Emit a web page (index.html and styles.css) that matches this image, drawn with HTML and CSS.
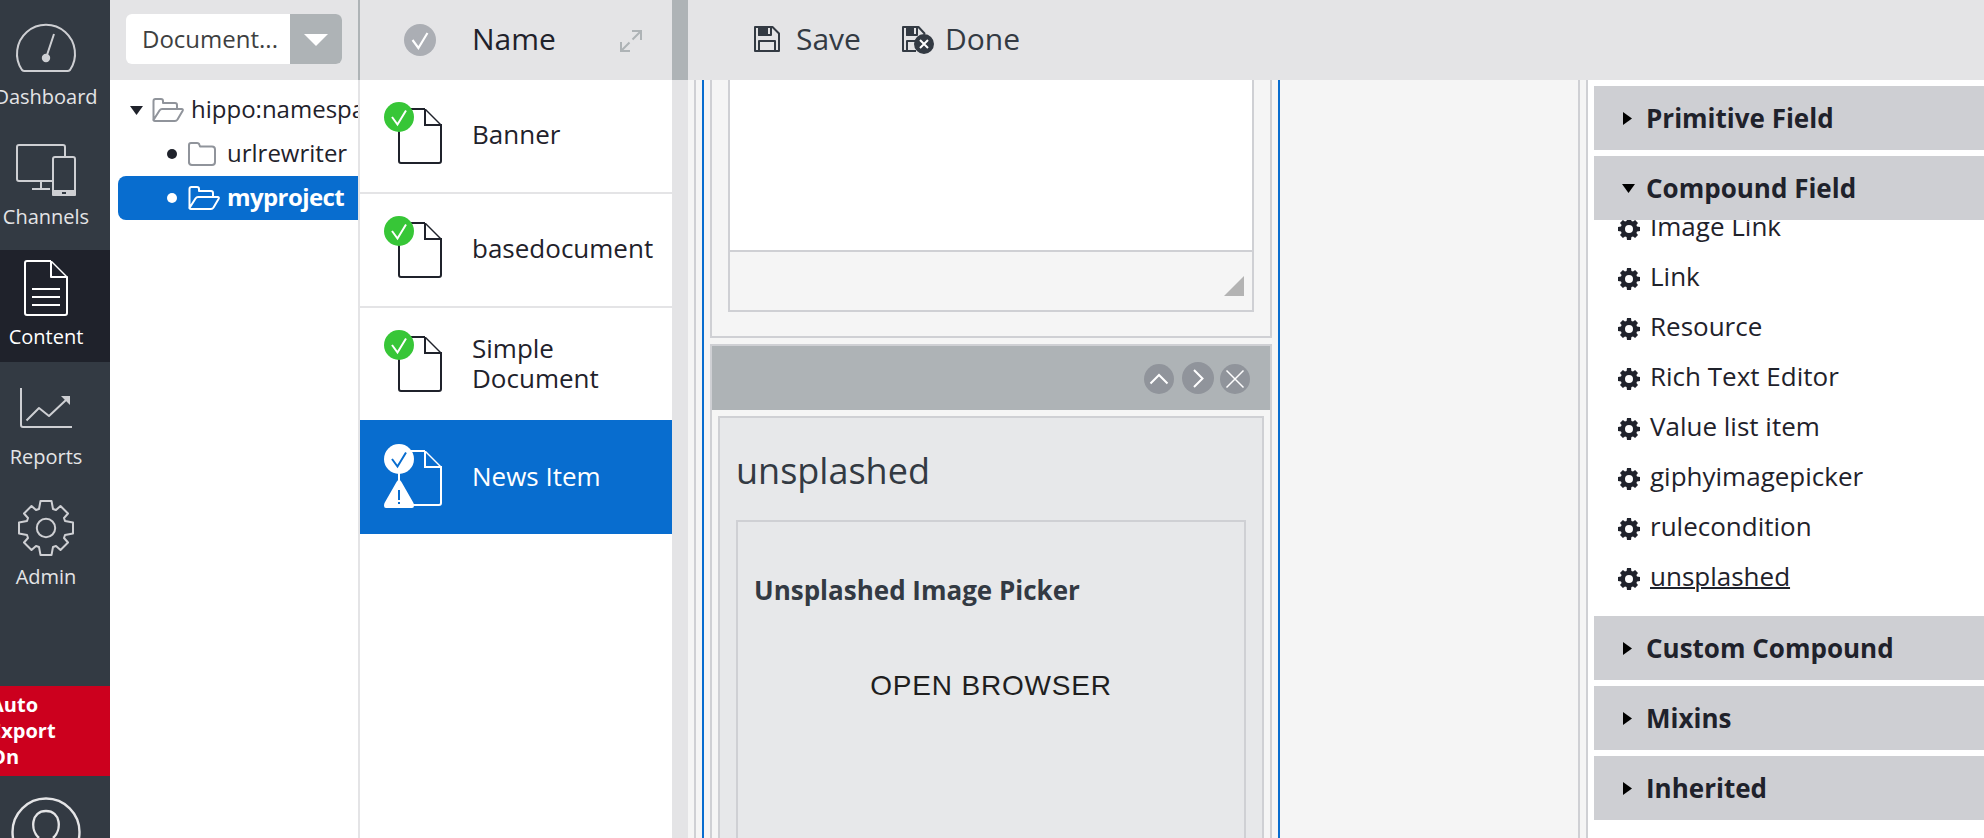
FILE: index.html
```html
<!DOCTYPE html>
<html lang="en">
<head>
<meta charset="utf-8">
<title>Content</title>
<link rel="stylesheet" href="styles.css">
</head>
<body>
<svg class="defs" width="0" height="0" aria-hidden="true">
  <symbol id="cog" viewBox="-11 -11 22 22">
    <path fill-rule="evenodd" d="M-2-11H2L2.4-8 4-7.4 6.1-9 9-6.1 7.4-4 8-2.4 11-2V2L8 2.4 7.4 4 9 6.1 6.1 9 4 7.4 2.4 8 2 11H-2L-2.4 8-4 7.4-6.1 9-9 6.1-7.4 4-8 2.4-11 2V-2L-8-2.4-7.4-4-9-6.1-6.1-9-4-7.4-2.4-8ZM0-4A4 4 0 1 0 0 4 4 4 0 1 0 0-4Z"/>
  </symbol>
  <symbol id="sheet" viewBox="0 0 44 56">
    <path class="ln" d="M27 1H3Q1 1 1 3V53Q1 55 3 55H41Q43 55 43 53V17H27V1"/>
    <path class="thin" d="M27.5 1.5L43 17"/>
  </symbol>
  <symbol id="tick" viewBox="0 0 30 30">
    <circle class="disc" cx="15" cy="15" r="15"/>
    <path class="mark" d="M8 15L13.5 22.5 22 8.5"/>
  </symbol>
  <symbol id="folder-open" viewBox="0 0 32 24">
    <path class="ln" d="M1.500 22V3Q1.500 1 3.500 1H9Q11 1 11 3V5H23Q25 5 25 7V10.500M1.500 22L7.500 12.500Q8.500 11 10 11H29.500Q31.500 11 30.500 13L25.500 21.500Q24.500 23 23 23H3Q1 23 1.500 21"/>
  </symbol>
  <symbol id="folder" viewBox="0 0 28 24">
    <path class="ln" d="M1 21V3Q1 1 3 1H9Q11 1 11.500 3L12 4.500H24Q27 4.500 27 7.500V20Q27 23 24 23H4Q1 23 1 20Z"/>
  </symbol>
</svg>

<div class="app">
  <nav class="side">
    <a class="nav"><svg class="nav-ico" viewBox="10 0 72 74"><path d="M24.500 61Q23 61 22 60A29 29 0 1 1 70 60Q69 61 67.500 61ZM46 48L54 24"/><circle class="fill" cx="46" cy="48" r="3.200"/></svg><span>Dashboard</span></a>
    <a class="nav"><svg class="nav-ico" viewBox="10 0 72 74"><path d="M52 51H19Q17 51 17 49V17Q17 15 19 15H63Q65 15 65 17V26M41 51V59M32 59H50M55 27H73Q75 27 75 29V63Q75 65 73 65H55Q53 65 53 63V29Q53 27 55 27Z"/><path class="fill" d="M53 61H75V65H53Z"/><path class="hole" d="M62 62H66V64H62Z"/></svg><span>Channels</span></a>
    <a class="nav on"><svg class="nav-ico" viewBox="10 0 72 74"><path d="M51 11H27Q25 11 25 13V63Q25 65 27 65H65Q67 65 67 63V27H51V11M32 39H60M32 47H60M32 55H60"/><path class="thin" d="M51.500 11.500L67 27"/></svg><span>Content</span></a>
    <a class="nav"><svg class="nav-ico" viewBox="10 0 72 74"><path d="M21 18V55Q21 57 23 57H72M26.500 50.500L39 38 49 46 66 30"/><path class="fill flat" d="M61 26H70V35Z"/></svg><span>Reports</span></a>
    <a class="nav"><svg class="nav-ico" viewBox="-36 -38 72 74"><path d="M-5.500-27H5.500L7-19 10-18 14.500-22 22-14.500 18-10 19-7 27-5.500V5.500L19 7 18 10 22 14.500 14.500 22 10 18 7 19 5.500 27H-5.500L-7 19-10 18-14.500 22-22 14.500-18 10-19 7-27 5.500V-5.500L-19-7-18-10-22-14.500-14.500-22-10-18-7-19Z"/><circle cx="0" cy="0" r="9.200"/></svg><span>Admin</span></a>
    <div class="export"><div class="export-text">Auto<br>Export<br>On</div></div>
    <svg class="user" viewBox="0 0 72 42"><circle cx="36" cy="36" r="33.500"/><path d="M29 42C20 34 21 15 36 15S52 34 43 42"/></svg>
  </nav>

  <section class="tree-col">
    <header class="bar tree-bar">
      <div class="select"><span class="select-text">Document...</span><span class="select-btn"><svg width="24" height="12" viewBox="0 0 24 12"><path d="M0 0H24L12 12Z"/></svg></span></div>
    </header>
    <div class="tree">
      <div class="node root"><svg class="caret" viewBox="0 0 13 9"><path d="M0 0H13L6.500 9Z"/></svg><svg class="fold" viewBox="0 0 32 24"><use href="#folder-open"/></svg><span>hippo:namespaces</span></div>
      <div class="node child"><i class="dot"></i><svg class="fold closed" viewBox="0 0 28 24"><use href="#folder"/></svg><span>urlrewriter</span></div>
      <div class="node child sel"><i class="dot"></i><svg class="fold" viewBox="0 0 32 24"><use href="#folder-open"/></svg><span>myproject</span></div>
    </div>
  </section>

  <section class="list-col">
    <header class="bar list-bar">
      <svg class="tick-head" viewBox="0 0 30 30"><use href="#tick"/></svg>
      <span class="list-title">Name</span>
      <svg class="expand" viewBox="0 0 22 22"><path d="M12 1H21V10M21 1L12.500 9.500M1 12V21H10M1 21L9.500 12.500"/></svg>
    </header>
    <div class="row"><div class="doc"><svg class="sheet"><use href="#sheet"/></svg><svg class="badge"><use href="#tick"/></svg></div><span>Banner</span></div>
    <div class="row"><div class="doc"><svg class="sheet"><use href="#sheet"/></svg><svg class="badge"><use href="#tick"/></svg></div><span>basedocument</span></div>
    <div class="row before"><div class="doc"><svg class="sheet"><use href="#sheet"/></svg><svg class="badge"><use href="#tick"/></svg></div><span>Simple<br>Document</span></div>
    <div class="row active"><div class="doc"><svg class="sheet"><use href="#sheet"/></svg><svg class="badge"><use href="#tick"/></svg><svg class="warn" viewBox="0 0 30 28"><path class="disc" d="M15 0Q16.500 0 17.500 2L29.500 23Q31 28 28 28H2Q-1 28 .5 23L12.500 2Q13.500 0 15 0Z"/><path class="bang" d="M15 10V20M15 22V24"/></svg></div><span>News Item</span></div>
  </section>

  <div class="split"><div class="split-top"></div></div>

  <main class="main">
    <header class="bar tools">
      <a class="tool"><svg class="save-ico" viewBox="0 0 26 26"><path d="M1 1H18.500L25 7.500V25H1ZM5 25V15H21V25M5 1V9H17V1"/><path class="solid" d="M5 1H13V9H5Z"/></svg><span>Save</span></a>
      <a class="tool"><svg class="done-ico" viewBox="0 0 32 28"><path d="M14 25H1V1H16.500L23 8M5 25V15H14M5 1V9H15V1"/><path class="solid" d="M5 1H11V9H5Z"/><circle class="solid" cx="22" cy="18" r="9"/><path class="x" d="M18 14L26 22M26 14L18 22"/></svg><span>Done</span></a>
    </header>
    <div class="body">
      <div class="canvas">
        <div class="column">
          <div class="field">
            <div class="editor"><div class="paper"></div><div class="foot"><svg width="20" height="20" viewBox="0 0 20 20"><path d="M20 0V20H0Z"/></svg></div></div>
          </div>
          <div class="compound">
            <div class="c-head">
              <svg class="b30" viewBox="0 0 30 30"><circle cx="15" cy="15" r="15"/><path d="M6.500 19.500L15 11 23.500 19.500"/></svg>
              <svg class="b32" viewBox="0 0 32 32"><circle cx="16" cy="16" r="16"/><path d="M12 8L20.500 16.500 12 25"/></svg>
              <svg class="b30" viewBox="0 0 30 30"><circle cx="15" cy="15" r="15"/><path class="fine" d="M6.500 6.500L23.500 23.500M23.500 6.500L6.500 23.500"/></svg>
            </div>
            <div class="c-body">
              <h2>unsplashed</h2>
              <div class="picker"><h3>Unsplashed Image Picker</h3><div class="open">OPEN BROWSER</div></div>
            </div>
          </div>
        </div>
      </div>
      <aside class="fields">
        <h4><svg class="right" viewBox="0 0 9 13"><path d="M0 0L9 6.500 0 13Z"/></svg>Primitive Field</h4>
        <h4><svg class="down" viewBox="0 0 13 9"><path d="M0 0H13L6.500 9Z"/></svg>Compound Field</h4>
        <div class="items">
          <div class="item"><svg class="cog"><use href="#cog"/></svg><span>Image Link</span></div>
          <div class="item"><svg class="cog"><use href="#cog"/></svg><span>Link</span></div>
          <div class="item"><svg class="cog"><use href="#cog"/></svg><span>Resource</span></div>
          <div class="item"><svg class="cog"><use href="#cog"/></svg><span>Rich Text Editor</span></div>
          <div class="item"><svg class="cog"><use href="#cog"/></svg><span>Value list item</span></div>
          <div class="item"><svg class="cog"><use href="#cog"/></svg><span>giphyimagepicker</span></div>
          <div class="item"><svg class="cog"><use href="#cog"/></svg><span>rulecondition</span></div>
          <div class="item hover"><svg class="cog"><use href="#cog"/></svg><span>unsplashed</span></div>
        </div>
        <h4><svg class="right" viewBox="0 0 9 13"><path d="M0 0L9 6.500 0 13Z"/></svg>Custom Compound</h4>
        <h4><svg class="right" viewBox="0 0 9 13"><path d="M0 0L9 6.500 0 13Z"/></svg>Mixins</h4>
        <h4><svg class="right" viewBox="0 0 9 13"><path d="M0 0L9 6.500 0 13Z"/></svg>Inherited</h4>
      </aside>
    </div>
  </main>
</div>
</body>
</html>
```
FILE: styles.css
```css
* { box-sizing: border-box; }
body { margin: 0; background: #fff; color: #1f222b; font-family: "Open Sans", "Noto Sans", sans-serif; font-size: 26px; line-height: 30px; overflow: hidden; }
svg { display: block; flex: none; }
.defs { position: absolute; }
h2, h3, h4 { margin: 0; }
.app { display: flex; width: 1984px; height: 838px; overflow: hidden; }
.bar { height: 80px; flex: none; background: #e4e4e6; display: flex; align-items: center; }

.side { width: 110px; flex: none; background: #333a43; padding-top: 10px; display: flex; flex-direction: column; overflow: hidden; }
.nav { height: 112px; flex: none; margin-bottom: 8px; padding-right: 18px; display: flex; flex-direction: column; align-items: center; font-size: 20px; line-height: 26px; color: #e4e4e6; white-space: nowrap; }
.nav-ico { width: 72px; height: 74px; fill: none; stroke: #cecfd3; stroke-width: 2; stroke-linejoin: round; }
.nav-ico .fill { fill: #cecfd3; }
.nav-ico .flat { stroke: none; }
.nav-ico .hole { fill: #333a43; stroke: none; }
.thin { stroke-width: 1.4; }
.nav.on { background: #1f222b; color: #fff; }
.nav.on .nav-ico { stroke: #fff; }
.export { height: 90px; flex: none; margin-top: 76px; padding-top: 6px; background: #cc001e; color: #fff; font-size: 20px; line-height: 26px; font-weight: 700; }
.export-text { margin-left: -10px; }
.user { width: 72px; height: 42px; margin: 20px 0 0 10px; fill: none; stroke: #e4e4e6; stroke-width: 2.4; }

.tree-col { width: 250px; flex: none; overflow: hidden; }
.tree-bar { width: 250px; padding-left: 16px; padding-bottom: 2px; border-right: 2px solid #aeb3b6; }
.select { display: flex; width: 216px; height: 50px; border-radius: 6px; overflow: hidden; background: #fff; color: #3e3f41; }
.select-text { width: 164px; padding-left: 16px; line-height: 49px; font-size: 24px; }
.select-btn { flex: 1; background: #aeb3b6; display: flex; align-items: center; justify-content: center; fill: #fff; padding-top: 2px; }
.tree { height: 758px; padding: 8px 0 0 8px; border-right: 2px solid #e4e4e6; overflow: hidden; font-size: 24px; line-height: 40px; }
.node { height: 44px; display: flex; align-items: center; white-space: nowrap; }
.node span { margin-top: -2px; }
.root { padding-left: 11.500px; }
.root .fold { margin: 0 7px 0 9.500px; }
.caret { width: 13px; height: 9px; fill: #1f222b; }
.child { padding-left: 49px; }
.dot { width: 10px; height: 10px; border-radius: 50%; background: currentColor; flex: none; }
.fold { width: 32px; height: 24px; margin: 0 7px 0 11px; fill: none; stroke: #90949b; stroke-width: 2; stroke-linejoin: round; }
.closed { width: 28px; margin-right: 11px; }
.sel { background: #086dcf; color: #fff; font-weight: 700; border-radius: 8px 0 0 8px; }
.sel span { letter-spacing: -.6px; }
.sel .fold { stroke: #fff; }

.list-col { width: 312px; flex: none; }
.list-bar { padding-left: 44px; font-size: 30px; }
.list-bar span, .tool span { margin-top: -2px; }
.tick-head { width: 32px; height: 32px; }
.disc { fill: #37c637; stroke: none; }
.mark { fill: none; stroke: #fff; stroke-width: 2; }
.tick-head { --disc: #abaeb4; }
.badge { --disc: #37c637; --mark: #fff; }
#tick .disc { fill: var(--disc); }
#tick .mark { stroke: var(--mark, #fff); }
.list-title { width: 148px; margin-left: 36px; }
.expand { width: 22px; height: 22px; margin-top: 2px; fill: none; stroke: #aeb3b6; stroke-width: 2; }
.row { height: 114px; border-bottom: 2px solid #e4e4e6; display: flex; align-items: center; padding: 0 0 4px 24px; }
.doc { position: relative; width: 58px; height: 62px; margin: -2px 30px 0 0; padding: 6px 0 0 14px; flex: none; }
.sheet { width: 44px; height: 56px; fill: none; stroke: #1f222b; stroke-width: 2; }
.badge { position: absolute; left: 0; top: 0; width: 30px; height: 30px; }
.before { border-color: #086dcf; }
.before span { margin-top: 2px; }
.active { height: 112px; background: #086dcf; color: #fff; border: 0; }
.active .sheet { stroke: #fff; }
.active .badge { --disc: #fff; --mark: #086dcf; }
.warn { position: absolute; left: 0; top: 36px; width: 30px; height: 28px; }
.warn .disc { fill: #fff; }
.bang { stroke: #086dcf; stroke-width: 2; }

.split { width: 16px; flex: none; background: #e4e4e6; }
.split-top { height: 80px; background: #aeb3b6; }

.main { flex: 1; min-width: 0; display: flex; flex-direction: column; }
.tools { padding-left: 66px; font-size: 30px; color: #333a43; }
.tool { display: flex; align-items: center; margin-right: 41px; }
.save-ico { width: 26px; height: 26px; margin: 0 16px 2px 0; }
.done-ico { width: 32px; height: 28px; margin-right: 11px; }
.save-ico, .done-ico { fill: none; stroke: #333a43; stroke-width: 2; stroke-linejoin: round; }
.tool .solid { fill: #333a43; }
.tool .x { stroke: #fff; }
.body { flex: 1; min-height: 0; display: flex; background: #f5f5f5; }
.canvas { width: 886px; flex: none; margin-left: 6px; border: solid #cfd0d4; border-width: 0 2px; padding-left: 6px; }
.column { width: 578px; height: 758px; border: solid #086dcf; border-width: 0 2px; padding: 0 6px; overflow: hidden; }
.field { height: 258px; border: 2px solid #cfd0d4; border-top: 0; padding: 0 16px; }
.editor { height: 232px; border: 2px solid #cfd0d4; border-top: 0; }
.paper { height: 172px; background: #fff; border-bottom: 2px solid #cfd0d4; }
.foot { height: 58px; display: flex; justify-content: flex-end; padding: 24px 8px 0 0; fill: #b3b3b3; }
.compound { height: 520px; margin-top: 6px; border: 2px solid #cfd0d4; }
.c-head { height: 64px; background: #aeb3b6; display: flex; align-items: flex-end; justify-content: flex-end; gap: 7px; padding: 0 20px 16px 0; }
.c-head circle { fill: #90949b; }
.c-head path { fill: none; stroke: #fff; stroke-width: 2; }
.c-head .fine { stroke-width: 1.5; }
.b30 { width: 30px; height: 30px; }
.b32 { width: 32px; height: 32px; margin: 0 -1px 0 1px; }
.c-body { height: 440px; margin: 6px; border: 2px solid #cfd0d4; background: #e7e8ea; padding: 31px 16px 0; color: #333a43; }
h2 { font-size: 36px; line-height: 44px; font-weight: 400; margin-bottom: 27px; }
.picker { height: 340px; border: 2px solid #cfd0d4; padding: 53px 16px 0; }
h3 { font-size: 26px; line-height: 30px; }
.open { margin-top: 65px; text-align: center; font: 28px/32px "Liberation Sans", Arial, sans-serif; letter-spacing: .8px; color: #1f1f1f; }

.fields { flex: 1; min-width: 0; margin-left: 6px; border-left: 2px solid #cfd0d4; background: #fff; padding: 6px 0 0 6px; }
h4 { height: 64px; margin-bottom: 6px; background: #cecfd3; display: flex; align-items: center; font-size: 26px; padding-left: 28px; }
.right { width: 9px; height: 13px; margin: 0 14px 0 1px; }
.down { width: 13px; height: 9px; margin: 0 11.500px 0 -.5px; }
.items { height: 396px; margin-top: -6px; overflow: hidden; }
.item { height: 50px; display: flex; align-items: center; padding-left: 24px; }
.item:first-child { margin-top: -18px; }
.item span { margin: -2px 0 0 10px; }
.cog { width: 22px; height: 22px; margin-top: 4px; fill: #1f222b; }
.hover span { text-decoration: underline; text-decoration-thickness: 2px; }
```
